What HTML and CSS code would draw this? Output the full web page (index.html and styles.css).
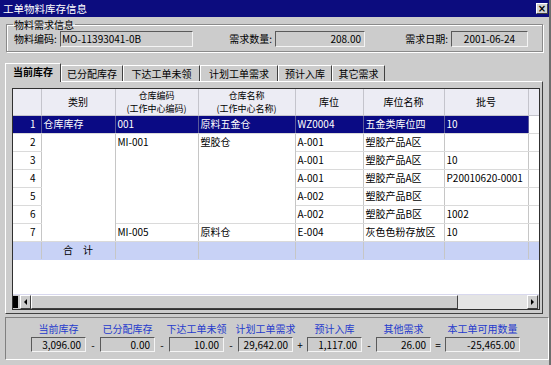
FILE: index.html
```html
<!DOCTYPE html>
<html lang="zh-CN">
<head>
<meta charset="utf-8">
<title>工单物料库存信息</title>
<link rel="stylesheet" href="styles.css">
</head>
<body>
<div class="window">
  <div class="titlebar">
    <span class="title">工单物料库存信息</span>
    <span class="close">×</span>
  </div>

  <fieldset class="group">
    <legend>物料需求信息</legend>
    <div class="fields">
      <span class="lbl lbl-code">物料编码:</span>
      <div class="input w-code">MO-11393041-0B</div>
      <span class="lbl lbl-qty">需求数量:</span>
      <div class="input w-qty">208.00</div>
      <span class="lbl lbl-date">需求日期:</span>
      <div class="input w-date">2001-06-24</div>
    </div>
  </fieldset>

  <div class="tabs">
    <div class="tab active">当前库存</div>
    <div class="tab">已分配库存</div>
    <div class="tab">下达工单未领</div>
    <div class="tab">计划工单需求</div>
    <div class="tab">预计入库</div>
    <div class="tab">其它需求</div>
  </div>

  <div class="panel">
    <div class="grid">
      <div class="grid-body">
        <table class="tbl">
          <colgroup>
            <col class="c-no"><col class="c-type"><col class="c-wcode"><col class="c-wname">
            <col class="c-loc"><col class="c-lname"><col class="c-lot"><col class="c-extra">
          </colgroup>
          <thead>
            <tr>
              <th></th>
              <th>类别</th>
              <th class="two"><span class="hl">仓库编码</span><span class="hl">(工作中心编码)</span></th>
              <th class="two"><span class="hl">仓库名称</span><span class="hl">(工作中心名称)</span></th>
              <th>库位</th>
              <th>库位名称</th>
              <th>批号</th>
              <th></th>
            </tr>
          </thead>
          <tbody>
            <tr class="sel">
              <td class="no">1</td><td>仓库库存</td><td>001</td><td>原料五金仓</td>
              <td>WZ0004</td><td>五金类库位四</td><td>10</td><td class="extra"></td>
            </tr>
            <tr>
              <td class="no">2</td><td rowspan="6"></td><td rowspan="5">MI-001</td><td rowspan="5">塑胶仓</td>
              <td>A-001</td><td>塑胶产品A区</td><td></td><td class="extra"></td>
            </tr>
            <tr>
              <td class="no">3</td><td>A-001</td><td>塑胶产品A区</td><td>10</td><td class="extra"></td>
            </tr>
            <tr>
              <td class="no">4</td><td>A-001</td><td>塑胶产品A区</td><td>P20010620-0001</td><td class="extra"></td>
            </tr>
            <tr>
              <td class="no">5</td><td>A-002</td><td>塑胶产品B区</td><td></td><td class="extra"></td>
            </tr>
            <tr>
              <td class="no">6</td><td>A-002</td><td>塑胶产品B区</td><td>1002</td><td class="extra"></td>
            </tr>
            <tr>
              <td class="no">7</td><td>MI-005</td><td>原料仓</td>
              <td>E-004</td><td>灰色色粉存放区</td><td>10</td><td class="extra"></td>
            </tr>
            <tr class="total">
              <td class="no"></td><td class="center">合　计</td><td></td><td></td>
              <td></td><td></td><td></td><td></td>
            </tr>
          </tbody>
        </table>
      </div>
      <div class="hscroll">
        <div class="hs-corner"></div>
        <div class="hs-btn"><span class="arrow-left"></span></div>
        <div class="hs-thumb"></div>
        <div class="hs-track"></div>
        <div class="hs-btn"><span class="arrow-right"></span></div>
      </div>
    </div>
  </div>

  <div class="summary">
    <div class="item"><span class="item-label">当前库存</span><div class="val">3,096.00</div></div>
    <div class="op">-</div>
    <div class="item"><span class="item-label">已分配库存</span><div class="val">0.00</div></div>
    <div class="op">-</div>
    <div class="item"><span class="item-label">下达工单未领</span><div class="val">10.00</div></div>
    <div class="op">-</div>
    <div class="item"><span class="item-label">计划工单需求</span><div class="val">29,642.00</div></div>
    <div class="op">+</div>
    <div class="item"><span class="item-label">预计入库</span><div class="val">1,117.00</div></div>
    <div class="op">-</div>
    <div class="item"><span class="item-label">其他需求</span><div class="val">26.00</div></div>
    <div class="op">=</div>
    <div class="item wide"><span class="item-label">本工单可用数量</span><div class="val">-25,465.00</div></div>
  </div>
</div>
</body>
</html>
```

FILE: styles.css
```css
html, body {
  margin: 0;
  padding: 0;
}

body {
  width: 551px;
  height: 365px;
  overflow: hidden;
  background: #cccccc;
  font-family: "Noto Sans CJK SC", "Liberation Sans", sans-serif;
  font-size: 10px;
  color: #000;
}

.window {
  height: 365px;
  box-sizing: border-box;
  border-right: 2px solid #6e6e6e;
}

/* title bar */
.titlebar {
  height: 17px;
  background: #0c0c7e;
  color: #fff;
  display: flex;
  align-items: center;
  justify-content: space-between;
  padding: 0 1px 0 3px;
}

.title {
  font-size: 10.5px;
  line-height: 12px;
}

.close {
  width: 12px;
  height: 11px;
  box-sizing: border-box;
  background: #d4d4d4;
  border: 1px solid;
  border-color: #fff #404040 #404040 #fff;
  color: #000;
  font-family: "DejaVu Sans", sans-serif;
  font-weight: bold;
  font-size: 10px;
  line-height: 9px;
  text-align: center;
}

/* group box */
.group {
  margin: 2px 6px 0 6px;
  padding: 1px 6px 4px 6px;
  border: 1px solid #8a8a8a;
  box-shadow: inset 1px 1px 0 #fff, 1px 1px 0 #fff;
  min-width: 0;
}

.group legend {
  padding: 0 1px;
  font-size: 10px;
  line-height: 11px;
}

.fields {
  display: flex;
  align-items: center;
  height: 16px;
}

.lbl {
  white-space: nowrap;
  line-height: 16px;
  box-sizing: border-box;
}

.lbl-code {
  width: 47px;
  padding-left: 1px;
}

.lbl-qty {
  width: 82px;
  text-align: right;
  padding-right: 3px;
}

.lbl-date {
  width: 86px;
  text-align: right;
  padding-right: 3px;
}

.input {
  height: 16px;
  box-sizing: border-box;
  border: 1px solid;
  border-color: #5a5a5a #f4f4f4 #f4f4f4 #5a5a5a;
  line-height: 14px;
  padding: 0 3px;
  white-space: nowrap;
  overflow: hidden;
}

.w-code { width: 133px; padding-left: 1px; }
.w-qty { width: 90px; text-align: right; }
.w-date { width: 77px; text-align: center; }

/* tabs */
.tabs {
  display: grid;
  grid-template-columns: 56px 62px 77px 78px 54px 53px;
  align-items: end;
  height: 18px;
  margin: 11px 0 0 5px;
}

.tab {
  height: 16px;
  box-sizing: border-box;
  border: 1px solid;
  border-color: #fff #404040 transparent #fff;
  border-bottom: none;
  line-height: 15px;
  text-align: center;
  white-space: nowrap;
}

.tab.active {
  height: 19px;
  margin-bottom: -1px;
  font-weight: bold;
  background: #cccccc;
  position: relative;
  z-index: 1;
}

/* tab panel */
.panel {
  margin: 0 6px 0 5px;
  height: 233px;
  box-sizing: border-box;
  border: 1px solid;
  border-color: #fff #404040 #404040 #fff;
  padding: 6px 2px 0 6px;
}

.grid {
  height: 222px;
  box-sizing: border-box;
  border: 1px solid #303030;
  display: flex;
  flex-direction: column;
  background: #fff;
}

.grid-body {
  flex: 1;
  overflow: hidden;
  background: #fff;
}

.tbl {
  width: 526px;
  table-layout: fixed;
  border-collapse: collapse;
}

.c-no { width: 28px; }
.c-type { width: 74px; }
.c-wcode { width: 83px; }
.c-wname { width: 97px; }
.c-loc { width: 68px; }
.c-lname { width: 81px; }
.c-lot { width: 84px; }
.c-extra { width: 11px; }

.tbl th {
  height: 26px;
  padding: 0;
  background: #ececf4;
  font-weight: normal;
  line-height: 12px;
  text-align: center;
  vertical-align: middle;
  border-right: 1px solid #c4c4cc;
  border-bottom: 1px solid #c4c4cc;
  white-space: nowrap;
}

.tbl th.two {
  font-size: 9px;
}

.tbl th .hl {
  display: block;
  height: 13.1px;
  line-height: 13.1px;
}

.tbl td {
  height: 17px;
  padding: 0 2px;
  line-height: 16px;
  vertical-align: top;
  border-right: 1px solid #c6c6c6;
  border-bottom: 1px solid #dadada;
  white-space: nowrap;
  overflow: hidden;
}

.tbl td.no {
  text-align: right;
  padding-right: 5px;
}

.tbl td.center {
  text-align: center;
}

.tbl tr.sel td {
  background: #0a0a84;
  color: #fff;
  border-right-color: #5a5a9a;
}

.tbl tr.sel td.extra {
  background: #fff;
}

.tbl tr.total td {
  background: #c8d2f6;
  border-bottom-color: #c8d2f6;
}

/* horizontal scrollbar */
.hscroll {
  height: 14px;
  display: flex;
  background: #cccccc;
  border-top: 1px solid #d8d8ee;
}

.hs-corner {
  width: 5px;
  margin: 1px 2px 1px 0;
  background: #000;
}

.hs-btn {
  width: 11px;
  box-sizing: border-box;
  border: 1px solid;
  border-color: #fff #404040 #404040 #fff;
  background: #cccccc;
  display: flex;
  align-items: center;
  justify-content: center;
}

.hs-thumb {
  width: 427px;
  box-sizing: border-box;
  border: 1px solid;
  border-color: #fff #404040 #404040 #fff;
  background: #cccccc;
}

.hs-track {
  flex: 1;
  background: #e4e4e4;
}

.hs-btn:last-child {
  margin-right: 1px;
}

.arrow-left {
  width: 0;
  height: 0;
  border-top: 3px solid transparent;
  border-bottom: 3px solid transparent;
  border-right: 3px solid #000;
}

.arrow-right {
  width: 0;
  height: 0;
  border-top: 3px solid transparent;
  border-bottom: 3px solid transparent;
  border-left: 3px solid #000;
}

/* summary */
.summary {
  margin: 3px 0 0 5px;
  height: 43px;
  box-sizing: border-box;
  border: 1px solid;
  border-color: #808080 #fff #fff #808080;
  padding: 6px 0 0 25px;
  display: flex;
  align-items: flex-start;
}

.item {
  width: 55px;
  display: flex;
  flex-direction: column;
  align-items: center;
  gap: 3px;
}

.item.wide {
  width: 75px;
}

.item-label {
  color: #1f3acc;
  line-height: 10px;
  white-space: nowrap;
}

.val {
  width: 100%;
  height: 15px;
  box-sizing: border-box;
  border: 1px solid;
  border-color: #5a5a5a #f4f4f4 #f4f4f4 #5a5a5a;
  text-align: right;
  padding-right: 4px;
  line-height: 13px;
  white-space: nowrap;
}

.op {
  width: 14px;
  margin-top: 13px;
  height: 15px;
  line-height: 15px;
  text-align: center;
}
```
